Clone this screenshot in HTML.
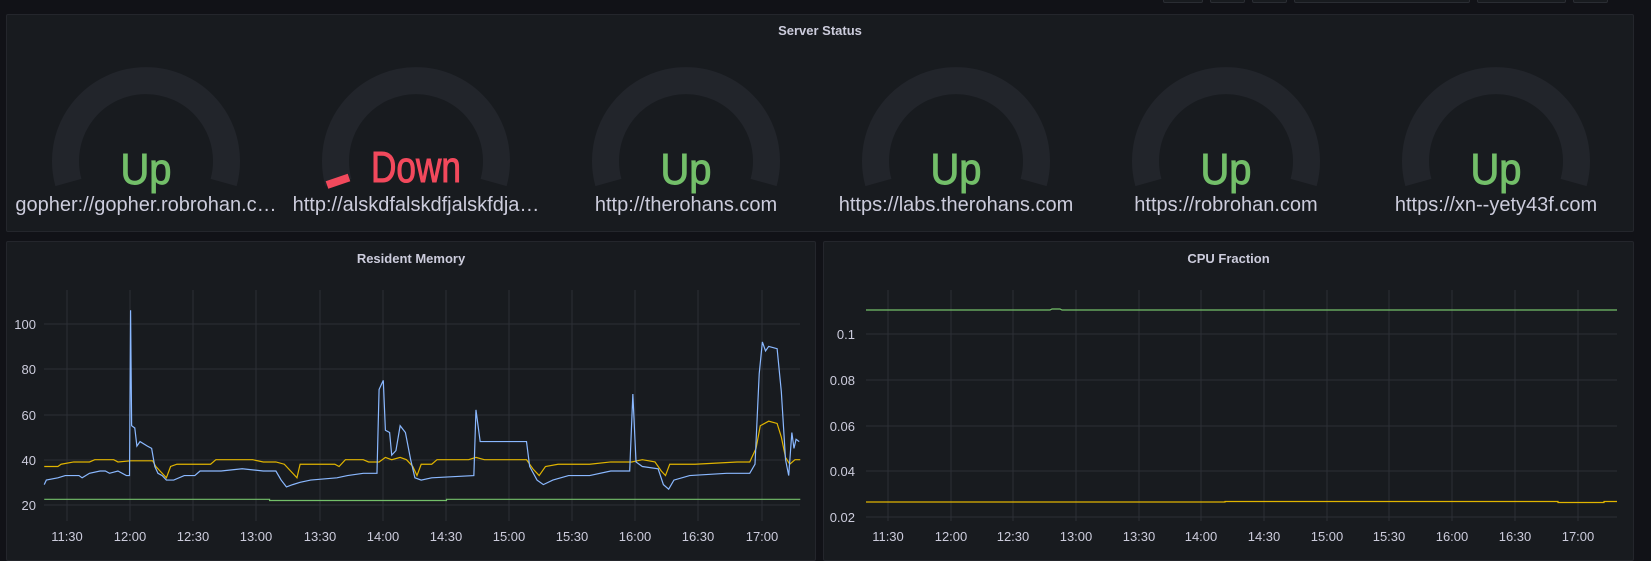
<!DOCTYPE html>
<html><head><meta charset="utf-8"><style>
html,body{margin:0;padding:0;background:#111217;width:1651px;height:551px;overflow:hidden;font-family:"Liberation Sans",sans-serif;}
.p{position:absolute;background:#181b1f;border:1px solid #24262c;border-radius:2px;box-sizing:border-box;}
.t{position:absolute;left:0;right:0;text-align:center;color:#ccccdc;font-size:13px;font-weight:bold;}
.btn{position:absolute;top:-3px;height:4px;border:1px solid #2a2d33;border-radius:2px;background:#181b1f;}
</style></head><body>
<div class="btn" style="left:1163px;width:38px"></div>
<div class="btn" style="left:1210px;width:33px"></div>
<div class="btn" style="left:1252px;width:33px"></div>
<div class="btn" style="left:1294px;width:174px"></div>
<div class="btn" style="left:1477px;width:87px"></div>
<div class="btn" style="left:1573px;width:33px"></div>

<div class="p" style="left:6px;top:14px;width:1628px;height:218px"><div class="t" style="top:8px">Server Status</div></div>
<div class="p" style="left:6px;top:241px;width:810px;height:320px"><div class="t" style="top:9px">Resident Memory</div></div>
<div class="p" style="left:823px;top:241px;width:811px;height:320px"><div class="t" style="top:9px">CPU Fraction</div></div>

<svg width="1651" height="551" style="position:absolute;left:0;top:0" font-family="Liberation Sans, sans-serif">
<defs>
<g id="arc"><path d="M-77.6,182.5 A80.5,80.5 0 1 1 77.6,182.5" fill="none" stroke="#22252b" stroke-width="27"/></g>
</defs>
<use href="#arc" x="146"/><use href="#arc" x="416"/><use href="#arc" x="686"/>
<use href="#arc" x="956"/><use href="#arc" x="1226"/><use href="#arc" x="1496"/>
<line x1="327" y1="185" x2="349" y2="177.5" stroke="#f2495c" stroke-width="8"/>
<g font-size="44" text-anchor="middle" fill="#73bf69" stroke="#73bf69" stroke-width="1" lengthAdjust="spacingAndGlyphs">
<text x="146" y="184" textLength="51" lengthAdjust="spacingAndGlyphs">Up</text>
<text x="416" y="182" fill="#f2495c" stroke="#f2495c" textLength="90" lengthAdjust="spacingAndGlyphs">Down</text>
<text x="686" y="184" textLength="51" lengthAdjust="spacingAndGlyphs">Up</text><text x="956" y="184" textLength="51" lengthAdjust="spacingAndGlyphs">Up</text><text x="1226" y="184" textLength="51" lengthAdjust="spacingAndGlyphs">Up</text><text x="1496" y="184" textLength="51" lengthAdjust="spacingAndGlyphs">Up</text>
</g>
<g font-size="20" text-anchor="middle" fill="#ccccdc">
<text x="146" y="211">gopher://gopher.robrohan.c…</text>
<text x="416" y="211">http://alskdfalskdfjalskfdja…</text>
<text x="686" y="211">http://therohans.com</text>
<text x="956" y="211">https://labs.therohans.com</text>
<text x="1226" y="211">https://robrohan.com</text>
<text x="1496" y="211">https://xn--yety43f.com</text>
</g>

<g stroke="#2c2f35" stroke-width="1">
<line x1="44" x2="800" y1="324" y2="324"/><line x1="44" x2="800" y1="369" y2="369"/><line x1="44" x2="800" y1="415" y2="415"/><line x1="44" x2="800" y1="460" y2="460"/><line x1="44" x2="800" y1="505" y2="505"/>
<line x1="67" x2="67" y1="290" y2="521"/><line x1="130" x2="130" y1="290" y2="521"/><line x1="193" x2="193" y1="290" y2="521"/><line x1="256" x2="256" y1="290" y2="521"/><line x1="320" x2="320" y1="290" y2="521"/><line x1="383" x2="383" y1="290" y2="521"/><line x1="446" x2="446" y1="290" y2="521"/><line x1="509" x2="509" y1="290" y2="521"/><line x1="572" x2="572" y1="290" y2="521"/><line x1="635" x2="635" y1="290" y2="521"/><line x1="698" x2="698" y1="290" y2="521"/><line x1="762" x2="762" y1="290" y2="521"/>
</g>
<g font-size="13" fill="#ccccdc" text-anchor="end">
<text x="36" y="329">100</text><text x="36" y="374">80</text><text x="36" y="420">60</text><text x="36" y="465">40</text><text x="36" y="510">20</text>
</g>
<g font-size="13" fill="#ccccdc" text-anchor="middle">
<text x="67" y="541">11:30</text><text x="130" y="541">12:00</text><text x="193" y="541">12:30</text><text x="256" y="541">13:00</text><text x="320" y="541">13:30</text><text x="383" y="541">14:00</text><text x="446" y="541">14:30</text><text x="509" y="541">15:00</text><text x="572" y="541">15:30</text><text x="635" y="541">16:00</text><text x="698" y="541">16:30</text><text x="762" y="541">17:00</text>
</g>
<g transform="matrix(1.053 0 0 -2.265 0 550.3)" fill="none">
<polyline vector-effect="non-scaling-stroke" stroke="#73bf69" stroke-width="1.2" points="42,22.5 256,22.5 256,22 380,22 424,22 424,22.5 760,22.5"/>
<polyline vector-effect="non-scaling-stroke" stroke="#e0b400" stroke-width="1.2" points="42,37 55,37 58,38 70,39 85,39 90,40 108,40 112,39 124,39.5 145,39.5 148,37 152,35 158,32 162,37 168,38 200,38 205,40 240,40 250,39 262,39 270,38 276,35 282,32 285,38 300,38 318,38 322,37 328,40 345,40 350,39 360,39 366,41 372,40 380,41 386,40 392,37 396,33 400,38 410,38 415,40 445,40 452,41 460,40 500,40 506,36 512,33 518,37 530,38 560,38 580,39 600,39 610,40 622,39 628,35 632,33 636,38 660,38 700,39 712,39 718,45 722,55 730,57 738,56 742,50 746,41 750,38 755,40 760,40"/>
<polyline vector-effect="non-scaling-stroke" stroke="#8ab8ff" stroke-width="1.2" points="42,29 44,31 55,32 62,33 75,33 78,32 85,34 95,35 100,35 104,34 112,35 120,33 123,33 124,106 125,55 128,54 130,46 133,48 140,46 144,45 147,37 150,34 154,33 158,31 165,31 175,33 185,33 190,35 210,35 230,36 250,35 262,35 267,31 272,28 278,29 285,30 295,31 320,32 330,33 345,34 358,34 360,71 364,75 366,53 370,52 372,42 376,44 380,55 385,52 390,40 394,32 400,31 410,32 450,33 452,62 456,48 500,48 503,37 510,31 516,29 525,31 540,33 560,33 580,35 598,35 601,69 604,39 610,37 625,36 630,29 635,27 640,31 655,33 690,34 712,34 717,38 721,78 724,92 727,88 730,90 738,89 742,70 746,40 749,33 752,52 754,45 756,49 759,48"/>
</g>

<g stroke="#2c2f35" stroke-width="1">
<line x1="866" x2="1617" y1="334" y2="334"/><line x1="866" x2="1617" y1="380" y2="380"/><line x1="866" x2="1617" y1="426" y2="426"/><line x1="866" x2="1617" y1="471" y2="471"/><line x1="866" x2="1617" y1="517" y2="517"/>
<line x1="888" x2="888" y1="290" y2="521"/><line x1="951" x2="951" y1="290" y2="521"/><line x1="1013" x2="1013" y1="290" y2="521"/><line x1="1076" x2="1076" y1="290" y2="521"/><line x1="1139" x2="1139" y1="290" y2="521"/><line x1="1201" x2="1201" y1="290" y2="521"/><line x1="1264" x2="1264" y1="290" y2="521"/><line x1="1327" x2="1327" y1="290" y2="521"/><line x1="1389" x2="1389" y1="290" y2="521"/><line x1="1452" x2="1452" y1="290" y2="521"/><line x1="1515" x2="1515" y1="290" y2="521"/><line x1="1578" x2="1578" y1="290" y2="521"/>
</g>
<g font-size="13" fill="#ccccdc" text-anchor="end">
<text x="855" y="339">0.1</text><text x="855" y="385">0.08</text><text x="855" y="431">0.06</text><text x="855" y="476">0.04</text><text x="855" y="522">0.02</text>
</g>
<g font-size="13" fill="#ccccdc" text-anchor="middle">
<text x="888" y="541">11:30</text><text x="951" y="541">12:00</text><text x="1013" y="541">12:30</text><text x="1076" y="541">13:00</text><text x="1139" y="541">13:30</text><text x="1201" y="541">14:00</text><text x="1264" y="541">14:30</text><text x="1327" y="541">15:00</text><text x="1389" y="541">15:30</text><text x="1452" y="541">16:00</text><text x="1515" y="541">16:30</text><text x="1578" y="541">17:00</text>
</g>
<polyline fill="none" stroke="#73bf69" stroke-width="1.2" points="866,310 1050,310 1052,309 1060,309 1062,310 1617,310"/>
<polyline fill="none" stroke="#e0b400" stroke-width="1.2" points="866,502 1225,502 1225,501.5 1558,501.5 1558,502.5 1604,502.5 1604,501.5 1617,501.5"/>
</svg>
</body></html>
